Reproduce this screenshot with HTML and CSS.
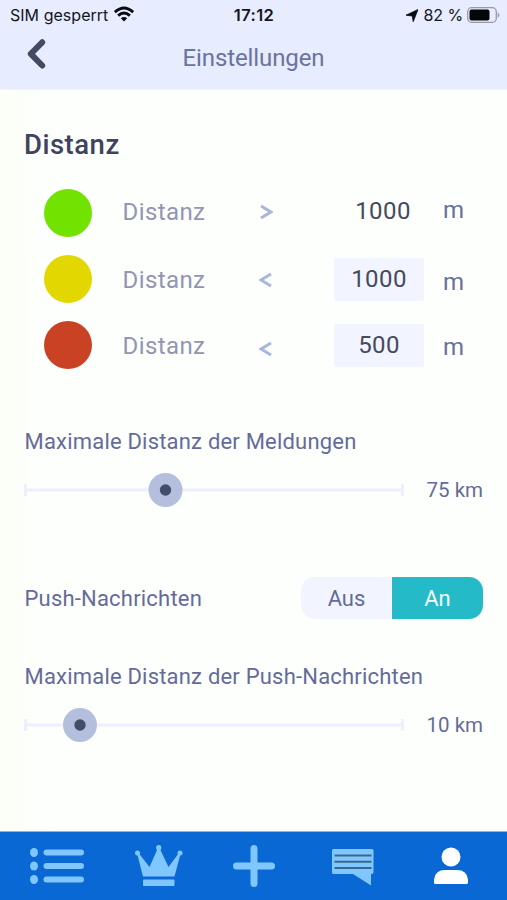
FILE: index.html
```html
<!DOCTYPE html>
<html lang="de">
<head>
<meta charset="utf-8">
<meta name="viewport" content="width=device-width, initial-scale=1">
<title>Einstellungen</title>
<link rel="stylesheet" href="styles.css">
</head>
<body>
<div class="app">
  <header class="header">
    <div class="status">
      <div class="status-left">
        <span class="carrier">SIM gesperrt</span>
        <svg class="wifi" viewBox="0 0 20 16" width="20" height="16"><g fill="none" stroke="#080a10" stroke-width="2.9"><path d="M.9 6.200Q10-2.200 19.100 6.200"/><path d="M4.100 9.700Q10 4.400 15.900 9.700"/></g><path d="M6.800 12.300Q10 9.500 13.200 12.300L10 15.600Z" fill="#080a10"/></svg>
      </div>
      <span class="time">17:12</span>
      <div class="status-right">
        <svg class="locate" viewBox="0 0 12 13" width="12" height="13"><path d="M12 .5 7.200 12.700 6.300 7 0 6.200Z" fill="#080a10" stroke="#080a10" stroke-width=".8" stroke-linejoin="round"/></svg>
        <span class="percent">82 %</span>
        <svg viewBox="0 0 33 16" width="33" height="16"><rect x=".7" y=".7" width="28.600" height="14.600" rx="4" fill="none" stroke="#989ba5" stroke-width="1.300"/><rect x="2.500" y="2.500" width="20" height="11" rx="2" fill="#05060a"/><path d="M30.700 5.500Q32.500 6.500 32.500 8T30.700 10.500Z" fill="#989ba5"/></svg>
      </div>
    </div>
    <nav class="titlebar">
      <svg class="back" viewBox="0 0 20 32" width="20" height="32"><path d="M16.200 4.300 4.800 15.800 16.200 27.500" fill="none" stroke="#434b63" stroke-width="6" stroke-linecap="round" stroke-linejoin="round"/></svg>
      <h1 class="title">Einstellungen</h1>
      <span></span>
    </nav>
  </header>

  <main class="content">
    <h2 class="heading">Distanz</h2>
    <section class="distances">
      <div class="row row-far">
        <span class="dot green"></span><span class="label">Distanz</span>
        <svg class="compare" viewBox="0 0 14 18" width="14" height="18"><path d="M2 3 12 9 2 15"/></svg>
        <span class="value">1000</span><span class="unit">m</span>
      </div>
      <div class="row row-mid">
        <span class="dot yellow"></span><span class="label">Distanz</span>
        <svg class="compare" viewBox="0 0 14 18" width="14" height="18"><path d="M12 3 2 9 12 15"/></svg>
        <span class="value field">1000</span><span class="unit">m</span>
      </div>
      <div class="row row-near">
        <span class="dot red"></span><span class="label">Distanz</span>
        <svg class="compare" viewBox="0 0 14 18" width="14" height="18"><path d="M12 3 2 9 12 15"/></svg>
        <span class="value field">500</span><span class="unit">m</span>
      </div>
    </section>

    <section class="range">
      <h3 class="caption">Maximale Distanz der Meldungen</h3>
      <div class="slider">
        <svg viewBox="0 0 380 36" width="380" height="36"><path d="M1.500 18H378M1.500 12V24M378.500 12V24" class="track"/><circle cx="141.500" cy="18" r="17" class="thumb"/><circle cx="141.500" cy="18" r="5.700" class="core"/></svg>
        <span class="amount">75 km</span>
      </div>
    </section>

    <section class="push">
      <h3 class="caption">Push-Nachrichten</h3>
      <div class="toggle"><span class="option">Aus</span><span class="option active">An</span></div>
    </section>

    <section class="range">
      <h3 class="caption">Maximale Distanz der Push-Nachrichten</h3>
      <div class="slider">
        <svg viewBox="0 0 380 36" width="380" height="36"><path d="M1.500 18H378M1.500 12V24M378.500 12V24" class="track"/><circle cx="56" cy="18" r="17" class="thumb"/><circle cx="56" cy="18" r="5.700" class="core"/></svg>
        <span class="amount">10 km</span>
      </div>
    </section>
  </main>

  <footer class="tabs">
    <svg viewBox="0 0 54 36" width="54" height="36"><g fill="#80c6ff"><ellipse cx="4" cy="4.500" rx="4" ry="4.500"/><ellipse cx="4" cy="18" rx="4" ry="4.500"/><ellipse cx="4" cy="31.500" rx="4" ry="4.500"/><rect x="13.500" y="1.500" width="40.500" height="6" rx="3"/><rect x="13.500" y="15" width="40.500" height="6" rx="3"/><rect x="13.500" y="28.500" width="40.500" height="6" rx="3"/></g></svg>
    <svg class="crown" viewBox="0 0 48 42" width="48" height="42"><g fill="#80c6ff"><path d="M8 31.500 2.200 9 4 8.500 14.500 22 22.500 4H25L33.500 22 43.500 8.500 45.500 9 39.500 31.500Z"/><circle cx="2.500" cy="8" r="2.500"/><circle cx="23.700" cy="2.700" r="2.600"/><circle cx="45" cy="8" r="2.500"/><rect x="8" y="34.500" width="31.500" height="6.500" rx="1"/></g></svg>
    <svg viewBox="0 0 42 42" width="42" height="42"><path d="M21 3.500V38.500M3.500 21H38.500" stroke="#80c6ff" stroke-width="7" stroke-linecap="round"/></svg>
    <svg class="chat" viewBox="0 0 42 37" width="42" height="37"><path d="M1.500 0H40Q41.500 0 41.500 1.500V23.500Q41.500 25 39 25V36.500L21 25H1.500Q0 25 0 23.500V1.500Q0 0 1.500 0Z" fill="#80c6ff"/><path d="M2.500 6.500H39.500M2.500 12.700H39.500M2.500 18.900H39.500" stroke="#38688b" stroke-width="2"/></svg>
    <svg viewBox="0 0 34 38" width="34" height="38"><circle cx="17" cy="10" r="9.500" fill="#fff"/><path d="M0 35.500V32.500Q1 23 11 23H23Q33 23 34 32.500V35.500Q34 37 32.500 37H1.500Q0 37 0 35.500Z" fill="#fff"/></svg>
  </footer>
</div>
</body>
</html>
```
FILE: styles.css
```css
* { box-sizing: border-box; }
body { margin: 0; font-family: Roboto, "Liberation Sans", sans-serif; }
h1, h2, h3 { margin: 0; font-weight: 400; }
svg { display: block; flex: none; }

.app {
  height: 900px;
  display: flex;
  flex-direction: column;
  background: linear-gradient(90deg, #fcfef7 0, #fdfffd 50px, #fdfffd);
}

.header { height: 90px; background: #e7ecff; border-bottom: 1px solid #f0f4ff; }
.status {
  height: 30px;
  padding: 0 7px 0 10px;
  display: grid;
  grid-template-columns: 1fr auto 1fr;
  align-items: center;
  font: 400 16px/30px Inter, sans-serif;
  color: #14161d;
}
.status-left, .status-right { display: flex; align-items: center; }
.status-right { justify-content: flex-end; }
.carrier { letter-spacing: 0.03px; }
.wifi { margin-left: 6px; margin-bottom: 2px; }
.time { font-size: 16.500px; font-weight: 600; letter-spacing: 0.4px; margin-right: 2px; }
.locate { margin-right: 6px; }
.percent { margin-right: 4px; letter-spacing: -0.1px; }

.titlebar {
  height: 59px;
  padding: 0 26px;
  display: grid;
  grid-template-columns: 20px 1fr 20px;
}
.back { margin-top: 8px; }
.title { text-align: center; font-size: 24px; line-height: 24px; padding-top: 16px; color: #6a749c; letter-spacing: -0.1px; }

.content { flex: 1; padding: 40px 24px 0; color: #656b99; }
.heading { font-size: 27.500px; font-weight: 500; line-height: 30px; color: #3e435e; letter-spacing: 0.5px; }

.distances { padding: 20px 0 0 20px; }
.row {
  height: 66px;
  display: grid;
  grid-template-columns: 78px 137px 75px 109px 24px;
  align-items: start;
  font-size: 24px;
  line-height: 24px;
}
.dot { width: 48px; height: 48px; margin-top: 9px; border-radius: 50%; }
.green { background: #72e300; }
.yellow { background: #e2d800; }
.red { background: #c94224; }
.label { color: #9296b1; margin-top: 20px; padding-left: 0.5px; letter-spacing: 0.4px; }
.compare { fill: none; stroke: #a8b6dc; stroke-width: 3; margin-top: 23px; }
.value { width: 90px; text-align: center; color: #454a60; margin-top: 19px; letter-spacing: 0.4px; }
.unit { color: #68719c; margin-top: 18px; }
.row-far .value { width: 98px; }
.field { height: 43px; margin-top: 12px; line-height: 42px; background: #f2f5ff; border-radius: 2px; }
.row-mid .label { margin-top: 22px; }
.row-mid .compare { margin-top: 25px; }
.row-mid .unit { margin-top: 24px; }
.row-near .label { margin-top: 22px; }
.row-near .compare { margin-top: 28px; }
.row-near .unit { margin-top: 23px; }

.range { padding-top: 51px; }
.caption { font-size: 22px; line-height: 26px; padding-left: 0.5px; letter-spacing: 0.2px; }
.slider { display: flex; justify-content: space-between; align-items: center; margin-top: 17px; }
.track { fill: none; stroke: #eceffd; stroke-width: 3; }
.thumb { fill: #b4bedd; }
.core { fill: #434c69; }
.amount { font-size: 20.5px; line-height: 24px; }

.push { margin-top: 69px; height: 42px; display: flex; justify-content: space-between; align-items: center; }
.push .caption { padding-top: 2px; }
.toggle { display: flex; width: 182px; height: 42px; border-radius: 14px; overflow: hidden; background: #f2f5ff; }
.option { flex: 1; text-align: center; font-size: 22px; line-height: 43px; }
.active { background: #25bac8; color: #f2fdff; }
.push + .range { padding-top: 45px; }

.tabs {
  height: 69px;
  padding: 0 7px 0 8px;
  display: grid;
  grid-template-columns: repeat(5, 1fr);
  place-items: center;
  background: #0968d3;
  border-top: 1px solid #8fb3e2;
}
.crown { margin-left: 7px; }
.chat { margin-top: 3px; margin-left: 1px; }
```
